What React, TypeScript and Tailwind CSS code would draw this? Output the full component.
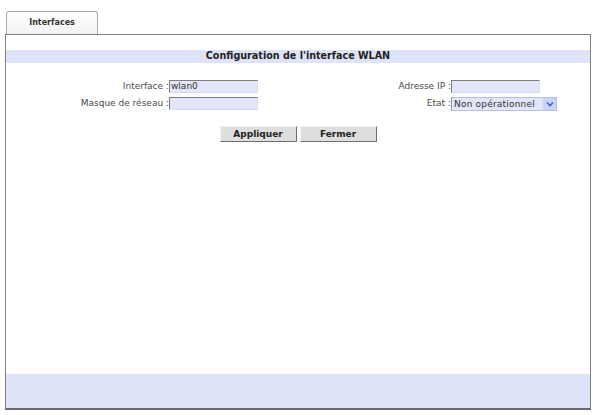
import React from "react";

const font = { fontFamily: '"DejaVu Sans", Verdana, sans-serif' };

function TextBox({ value = "" }: { value?: string }) {
  return (
    <div className="w-[89px] h-[13px] bg-[#e3e6f8] border border-t-[#7d7d7d] border-l-[#7d7d7d] border-r-[#d9dcef] border-b-[#d9dcef] text-[9px] leading-[11px] text-[#333] pl-[1px]">
      {value}
    </div>
  );
}

function Select({ value }: { value: string }) {
  return (
    <div className="w-[106px] h-[14px] bg-[#e3e6f8] border border-[#b9bfdc] border-l-[#8d93ad] flex items-center text-[9px] text-[#333]">
      <span className="flex-1 pl-[2px] leading-[12px] tracking-[0.2px]">{value}</span>
      <span className="w-[14px] h-full bg-[#c5d4f7] border-l border-[#d9e2fb] flex items-center justify-center">
        <svg width="8" height="6" viewBox="0 0 8 6">
          <path d="M1 1.5 L4 4.5 L7 1.5" fill="none" stroke="#4a64a8" strokeWidth="1.6" />
        </svg>
      </span>
    </div>
  );
}

function Btn({ label }: { label: string }) {
  return (
    <button className="w-[77px] h-[16px] bg-[#dedede] border border-t-[#f4f4f4] border-l-[#f4f4f4] border-r-[#6f6f6f] border-b-[#6f6f6f] text-[9px] font-bold text-[#222] leading-[14px]">
      {label}
    </button>
  );
}

export default function App() {
  return (
    <div className="w-[593px] h-[415px] bg-white pt-[11px] pl-[5px]" style={font}>
      <div className="ml-[1px] w-[92px] h-[23px] border border-b-0 border-[#a3a9b6] rounded-t-[3px] bg-gradient-to-b from-white to-[#f3f3f3] flex items-center justify-center text-[8px] font-bold text-[#333]">
        Interfaces
      </div>
      <div className="w-[586px] h-[376px] border border-[#7f7f7f] border-b-2 border-b-[#6a6a72] flex flex-col">
        <div className="mt-[15px] h-[13px] bg-[#dfe3f7] flex items-center justify-center text-[9.6px] font-bold text-[#222]">
          Configuration de l'interface WLAN
        </div>

        <div className="mt-[17px] grid grid-cols-[163px_120px_162px_1fr] gap-y-[3px] items-center text-[9px] text-[#4a4a4a]">
          <div className="text-right">Interface :</div>
          <TextBox value="wlan0" />
          <div className="text-right">Adresse IP :</div>
          <TextBox />

          <div className="text-right">Masque de réseau :</div>
          <TextBox />
          <div className="text-right">Etat :</div>
          <Select value="Non opérationnel" />
        </div>

        <div className="mt-[15px] flex justify-center gap-[3px]">
          <Btn label="Appliquer" />
          <Btn label="Fermer" />
        </div>

        <div className="mt-auto h-[34px] bg-[#dfe3f7]" />
      </div>
    </div>
  );
}
